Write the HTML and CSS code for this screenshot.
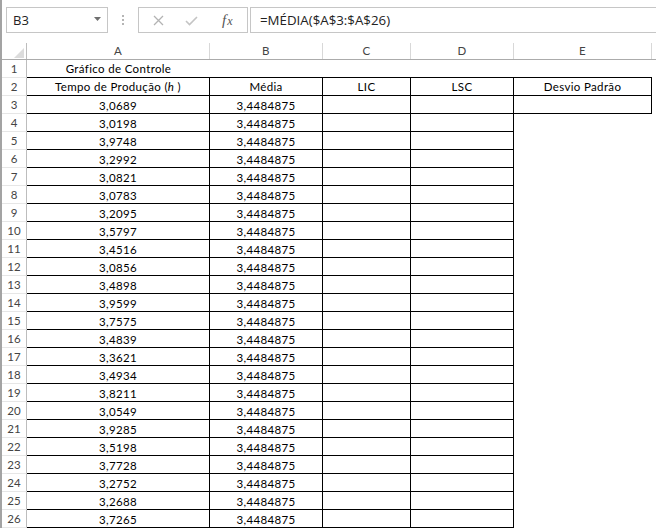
FILE: index.html
```html
<!DOCTYPE html>
<html lang="pt">
<head>
<meta charset="utf-8">
<title>Gráfico de Controle</title>
<link rel="stylesheet" href="styles.css">
</head>
<body>
<div class="app">
  <div class="fbar">
    <div class="namebox">
      <span>B3</span>
      <svg class="dd" width="7" height="4" viewBox="0 0 7 4"><polygon points="0,0 7,0 3.5,4" fill="#6f6f6f"/></svg>
    </div>
    <div class="grip"><i></i><i></i><i></i></div>
    <div class="fxbox">
      <svg class="ico-x" width="11" height="11" viewBox="0 0 11 11"><path d="M1 1 L10 10 M10 1 L1 10" stroke="#b3b3b3" stroke-width="1.3" fill="none"/></svg>
      <svg class="ico-ok" width="13" height="10" viewBox="0 0 13 10"><path d="M1 5 L4.5 8.5 L12 1" stroke="#c4c4c4" stroke-width="1.6" fill="none"/></svg>
      <span class="fx"><span class="f">f</span><span class="x">x</span></span>
    </div>
    <div class="formula">=MÉDIA($A$3:$A$26)</div>
  </div>

  <div class="sheet">
    <div class="hd"><div class="lbl corner"><svg width="10" height="10" viewBox="0 0 10 10"><polygon points="10,0 10,10 0,10" fill="#dcdcdc"/></svg></div></div>
    <div class="hd"><div class="lbl">A</div></div>
    <div class="hd"><div class="lbl">B</div></div>
    <div class="hd"><div class="lbl">C</div></div>
    <div class="hd"><div class="lbl">D</div></div>
    <div class="hd"><div class="lbl">E</div></div>
    <div class="hd"><div class="lbl nosep"></div></div>

    <div class="rh">1</div><div class="c t bb">Gráfico de Controle</div><div class="c bb"></div><div class="c bb"></div><div class="c bb"></div><div class="c bb"></div><div class="c"></div>
    <div class="rh">2</div><div class="c t b">Tempo de Produção (<i>h</i> )</div><div class="c t b">Média</div><div class="c t b">LIC</div><div class="c t b">LSC</div><div class="c t b">Desvio Padrão</div><div class="c"></div>
    <div class="rh">3</div><div class="c b">3,0689</div><div class="c b">3,4484875</div><div class="c b"></div><div class="c b"></div><div class="c b"></div><div class="c"></div>
    <div class="rh">4</div><div class="c b">3,0198</div><div class="c b">3,4484875</div><div class="c b"></div><div class="c b"></div><div class="c"></div><div class="c"></div>
    <div class="rh">5</div><div class="c b">3,9748</div><div class="c b">3,4484875</div><div class="c b"></div><div class="c b"></div><div class="c"></div><div class="c"></div>
    <div class="rh">6</div><div class="c b">3,2992</div><div class="c b">3,4484875</div><div class="c b"></div><div class="c b"></div><div class="c"></div><div class="c"></div>
    <div class="rh">7</div><div class="c b">3,0821</div><div class="c b">3,4484875</div><div class="c b"></div><div class="c b"></div><div class="c"></div><div class="c"></div>
    <div class="rh">8</div><div class="c b">3,0783</div><div class="c b">3,4484875</div><div class="c b"></div><div class="c b"></div><div class="c"></div><div class="c"></div>
    <div class="rh">9</div><div class="c b">3,2095</div><div class="c b">3,4484875</div><div class="c b"></div><div class="c b"></div><div class="c"></div><div class="c"></div>
    <div class="rh">10</div><div class="c b">3,5797</div><div class="c b">3,4484875</div><div class="c b"></div><div class="c b"></div><div class="c"></div><div class="c"></div>
    <div class="rh">11</div><div class="c b">3,4516</div><div class="c b">3,4484875</div><div class="c b"></div><div class="c b"></div><div class="c"></div><div class="c"></div>
    <div class="rh">12</div><div class="c b">3,0856</div><div class="c b">3,4484875</div><div class="c b"></div><div class="c b"></div><div class="c"></div><div class="c"></div>
    <div class="rh">13</div><div class="c b">3,4898</div><div class="c b">3,4484875</div><div class="c b"></div><div class="c b"></div><div class="c"></div><div class="c"></div>
    <div class="rh">14</div><div class="c b">3,9599</div><div class="c b">3,4484875</div><div class="c b"></div><div class="c b"></div><div class="c"></div><div class="c"></div>
    <div class="rh">15</div><div class="c b">3,7575</div><div class="c b">3,4484875</div><div class="c b"></div><div class="c b"></div><div class="c"></div><div class="c"></div>
    <div class="rh">16</div><div class="c b">3,4839</div><div class="c b">3,4484875</div><div class="c b"></div><div class="c b"></div><div class="c"></div><div class="c"></div>
    <div class="rh">17</div><div class="c b">3,3621</div><div class="c b">3,4484875</div><div class="c b"></div><div class="c b"></div><div class="c"></div><div class="c"></div>
    <div class="rh">18</div><div class="c b">3,4934</div><div class="c b">3,4484875</div><div class="c b"></div><div class="c b"></div><div class="c"></div><div class="c"></div>
    <div class="rh">19</div><div class="c b">3,8211</div><div class="c b">3,4484875</div><div class="c b"></div><div class="c b"></div><div class="c"></div><div class="c"></div>
    <div class="rh">20</div><div class="c b">3,0549</div><div class="c b">3,4484875</div><div class="c b"></div><div class="c b"></div><div class="c"></div><div class="c"></div>
    <div class="rh">21</div><div class="c b">3,9285</div><div class="c b">3,4484875</div><div class="c b"></div><div class="c b"></div><div class="c"></div><div class="c"></div>
    <div class="rh">22</div><div class="c b">3,5198</div><div class="c b">3,4484875</div><div class="c b"></div><div class="c b"></div><div class="c"></div><div class="c"></div>
    <div class="rh">23</div><div class="c b">3,7728</div><div class="c b">3,4484875</div><div class="c b"></div><div class="c b"></div><div class="c"></div><div class="c"></div>
    <div class="rh">24</div><div class="c b">3,2752</div><div class="c b">3,4484875</div><div class="c b"></div><div class="c b"></div><div class="c"></div><div class="c"></div>
    <div class="rh">25</div><div class="c b">3,2688</div><div class="c b">3,4484875</div><div class="c b"></div><div class="c b"></div><div class="c"></div><div class="c"></div>
    <div class="rh">26</div><div class="c b">3,7265</div><div class="c b">3,4484875</div><div class="c b"></div><div class="c b"></div><div class="c"></div><div class="c"></div>
  </div>
</div>
</body>
</html>
```

FILE: styles.css
```css
html, body {
  margin: 0;
  padding: 0;
  background: #ffffff;
}

.app {
  width: 656px;
  height: 528px;
  overflow: hidden;
  border-left: 2px solid #a3a3a3;
  box-sizing: border-box;
  background: #ffffff;
}

/* formula bar */
.fbar {
  height: 40px;
  display: flex;
  align-items: flex-start;
  box-sizing: border-box;
  padding-top: 7px;
  font-family: "Segoe UI", "Open Sans", sans-serif;
  font-size: 13px;
  color: #222;
}

.namebox {
  margin-left: 4px;
  width: 102px;
  height: 26px;
  box-sizing: border-box;
  border: 1px solid #c6c6c6;
  display: flex;
  align-items: center;
  justify-content: space-between;
  padding: 0 6px 0 6px;
}

.namebox span {
  line-height: 24px;
}

.dd {
  display: block;
  margin-top: -3px;
}

.grip {
  width: 30px;
  height: 26px;
  display: flex;
  flex-direction: column;
  align-items: center;
  justify-content: center;
  gap: 2px;
}

.grip i {
  display: block;
  width: 2px;
  height: 2px;
  background: #b5b5b5;
}

.fxbox {
  width: 110px;
  height: 26px;
  box-sizing: border-box;
  border: 1px solid #c6c6c6;
  display: flex;
  align-items: center;
  padding-left: 14px;
}

.ico-x {
  display: block;
}

.ico-ok {
  display: block;
  margin-left: 21px;
  margin-top: 1px;
}

.fx {
  margin-left: 24px;
  font-family: "Liberation Serif", "DejaVu Serif", serif;
  font-style: italic;
  color: #555;
  display: flex;
  align-items: baseline;
}

.fx .f {
  font-size: 15px;
}

.fx .x {
  font-size: 12px;
  margin-left: 1px;
}

.formula {
  flex: 1;
  margin-left: 2px;
  height: 26px;
  box-sizing: border-box;
  border: 1px solid #c6c6c6;
  border-right: none;
  padding-left: 9px;
  line-height: 24px;
  font-size: 13.3px;
  color: #222;
  white-space: nowrap;
}

/* sheet grid */
.sheet {
  display: grid;
  grid-template-columns: 25px 183px 113px 88px 103px 138px 1fr;
  grid-template-rows: 20px;
  grid-auto-rows: 18px;
  font-family: "Lato", "Open Sans", sans-serif;
  font-size: 11.5px;
  letter-spacing: 0.35px;
  color: #000;
}

.hd {
  box-sizing: border-box;
  height: 20px;
  padding-top: 3px;
  border-bottom: 1px solid #ababab;
}

.hd .lbl {
  height: 16px;
  box-sizing: border-box;
  border-right: 1px solid #d8d8d8;
  text-align: center;
  line-height: 16px;
  color: #444;
}

.hd .lbl.corner {
  border-right-color: #bdbdbd;
  display: flex;
  justify-content: flex-end;
  align-items: flex-end;
  padding: 0 2px 1px 0;
}

.hd .lbl.corner svg {
  display: block;
}

.hd .lbl.nosep {
  border-right: none;
}

.rh {
  box-sizing: border-box;
  border-right: 1px solid #bdbdbd;
  border-bottom: 1px solid #e6e6e6;
  text-align: center;
  line-height: 17px;
  color: #444;
  letter-spacing: 0;
}

.c {
  box-sizing: border-box;
  text-align: center;
  padding-top: 2px;
  line-height: 16px;
  white-space: nowrap;
  overflow: hidden;
}

.c.t {
  padding-top: 0;
  line-height: 17px;
}

.c.b {
  border-right: 1px solid #000;
  border-bottom: 1px solid #000;
}

.c.bb {
  border-bottom: 1px solid #000;
}
```
